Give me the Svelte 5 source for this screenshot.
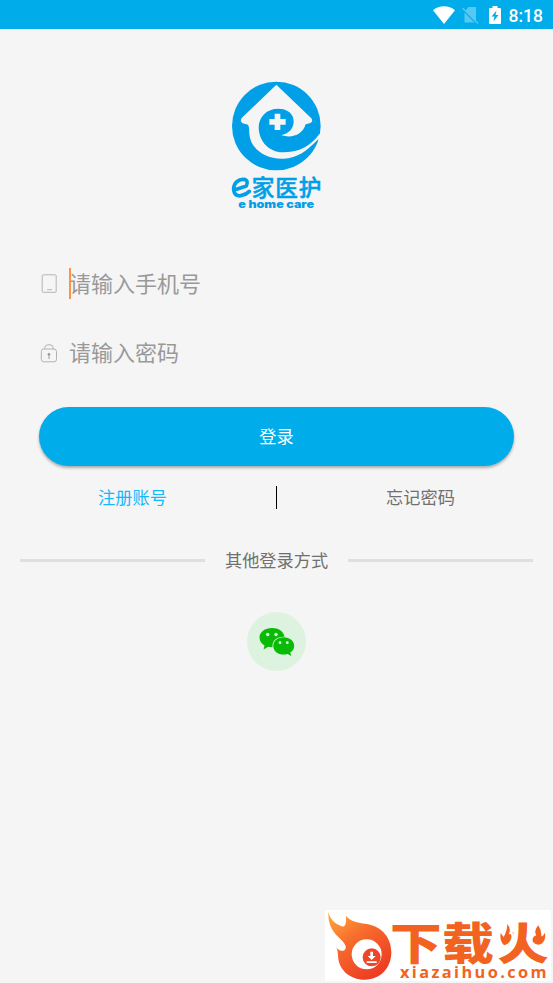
<script lang="ts">
    let phone = ''
    let password = ''
</script>

<div class="screen">
    <header class="status-bar">
        <svg class="wifi" viewBox="0 0 22 18" width="22" height="18">
            <path d="M0 4.2C6-1.2 16-1.2 22 4.2L11 18z" fill="#fff" />
        </svg>
        <svg class="sim" viewBox="0 0 17 18" width="17" height="18">
            <path d="M6.5 1H14V15.5L4 5.5V4zM2.5 6.5L12.5 16.5H2.5z" fill="#56c8f1" />
            <path d="M.5 2L16 17.5" stroke="#56c8f1" stroke-width="1.2" />
        </svg>
        <svg class="battery" viewBox="0 0 12 18" width="12" height="18">
            <path d="M3.5 0h5v2H11q1 0 1 1v14q0 1-1 1H1q-1 0-1-1V3q0-1 1-1h2.5z" fill="#fff" />
            <path d="M7.5 4.5L2.5 10.5H5.5L4.5 15.5L9.5 9H6.5z" fill="#00adea" />
        </svg>
        <span class="time">8:18</span>
    </header>

    <main>
        <svg class="logo" viewBox="0 0 330 435" width="110" height="145">
            <circle cx="163" cy="162" r="133" fill="#009fe8" />
            <path
                d="M163 38L268 139Q275 151 263 154L251 157C242 188 211 200 178 190C202 184 215 169 215 148C215 124 195 110 169 110C134 110 110 134 110 167C112 211 142 239 181 241C218 242 248 230 266 214Q283 200 292 186L302 186L300 212L293 212Q294 200 287 203C254 236 228 258 184 260C127 262 85 229 82 185Q82 163 78 158L62 154Q53 149 59 138z"
                fill="#f5f5f5"
            />
            <path d="M158 125h17v16h16v17h-16v16h-17v-16h-16v-17h16z" fill="#f5f5f5" />
            <path d="M37 354L73 342Q81 324 65 322C49 321 35 334 35 351C35 369 48 374 60 370Q73 367 82 358" fill="none" stroke="#009fe8" stroke-width="11" stroke-linecap="round" stroke-linejoin="round" />
            <text class="logo-cn" x="89" y="371" textLength="209">家医护</text>
            <text class="logo-en" x="49" y="407" textLength="227" lengthAdjust="spacingAndGlyphs">e home care</text>
        </svg>

        <form on:submit|preventDefault>
            <label class="field">
                <svg viewBox="0 0 18 20" width="18" height="20" fill="none" stroke="#b6b6b6">
                    <rect x="3.2" y=".8" width="14" height="17.5" rx="1" />
                    <path d="M8 15.7h5" />
                </svg>
                <span class="entry">
                    <input type="tel" placeholder="请输入手机号" bind:value={phone} />
                    <i class="caret"></i>
                </span>
            </label>
            <label class="field">
                <svg viewBox="0 0 18 20" width="18" height="20" fill="none" stroke="#b2b2b2">
                    <rect x="2.3" y="5" width="15.2" height="12.8" rx="2.5" />
                    <path d="M5.8 5V3.7Q6 .8 9 .8h2Q14 .8 14.2 3.7V5" />
                    <path d="M10 10v5" stroke="#999" />
                    <circle cx="10" cy="10.2" r="1.3" fill="#999" stroke="none" />
                </svg>
                <span class="entry">
                    <input class="password" type="password" placeholder="请输入密码" bind:value={password} />
                </span>
            </label>
            <button class="login" type="submit">登录</button>
        </form>

        <nav class="links">
            <span class="register">注册账号</span>
            <i class="split"></i>
            <span>忘记密码</span>
        </nav>

        <div class="other"><span>其他登录方式</span></div>

        <div class="wechat">
            <svg viewBox="0 0 36 30" width="36" height="30">
                <path d="M13 1C5.8 1 .5 5.2.5 10.5C.5 14 2.5 16.7 5.5 18.6L4.6 22.5L9.1 19.8Q11 20.3 13.5 20.2C12.8 13.5 18 9.4 25.5 9.7C24.5 4.4 19.5 1 13 1z" fill="#09bb07" />
                <path d="M24.5 10.3C18.5 10.3 14.3 14.1 14.3 18.9C14.3 24 18.7 27.5 24.6 27.5Q27 27.5 28.7 26.9L32.2 29L31.3 25.4C33.8 23.8 35.2 21.5 35.2 18.9C35.2 14.1 30.7 10.3 24.5 10.3z" fill="#09bb07" />
                <circle cx="8.7" cy="7.5" r="1.7" fill="#ddf3df" />
                <circle cx="17" cy="7.5" r="1.7" fill="#ddf3df" />
                <circle cx="21" cy="15.7" r="1.4" fill="#ddf3df" />
                <circle cx="28.3" cy="15.7" r="1.4" fill="#ddf3df" />
            </svg>
        </div>
    </main>

    <svg class="watermark" viewBox="15 30 678 213" width="226" height="71">
        <defs>
            <linearGradient id="flame" x1="0" y1="0" x2=".65" y2="1">
                <stop offset="0" stop-color="#ffad3d" />
                <stop offset=".45" stop-color="#f76c2c" />
                <stop offset="1" stop-color="#ed3c24" />
            </linearGradient>
        </defs>
        <rect x="15" y="30" width="678" height="213" fill="#fff" />
        <path d="M25 35C30 59 46 70 61 77C73 84 80 77 78 47C91 65 116 68 145 73C188 82 214 115 214 157C214 205 180 239 135 239C87 239 54 207 54 164Q53 154 49 139C51 151 66 156 74 150C86 139 66 121 51 107C33 87 24 68 25 35z" fill="url(#flame)" />
        <circle cx="140" cy="163" r="45" fill="#fff" />
        <circle cx="155" cy="172" r="27" fill="#ee4727" />
        <path d="M151 155h8v13h8l-12 12l-12-12h8zM140 184h30v5h-30z" fill="#fff" />
        <text class="mark-cn" x="210 367 532" y="0" transform="translate(0 180) scale(1 .85)">下载火</text>
        <path class="sparks" d="M562 72Q575 87 566 103Q576 98 574 114Q570 131 552 136Q538 122 542 99L551 111Q561 94 562 72zM655 76Q640 91 649 106Q634 111 639 126Q652 140 667 130Q680 116 674 98Q670 109 664 109Q665 91 655 76z" />
        <text class="mark-en" x="240" y="233" textLength="440">xiazaihuo.com</text>
    </svg>
</div>

<style>
    :global(body) {
        margin: 0;
        background: #f5f5f5;
    }

    .screen {
        position: relative;
        height: 983px;
        overflow: hidden;
        background: #f5f5f5;
        font-family: "Noto Sans CJK SC", sans-serif;
        color: #707070;
        font-size: 17.2px;
    }

    .status-bar {
        display: flex;
        align-items: center;
        justify-content: flex-end;
        box-sizing: border-box;
        height: 29px;
        padding-right: 10px;
        background: #00adea;
        color: #fff;
    }

    .wifi {
        margin-right: 7px;
    }

    .sim {
        margin-right: 10px;
    }

    .battery {
        margin-right: 8px;
    }

    .time {
        font: 500 17.5px/29px Roboto, sans-serif;
        padding-top: 3px;
    }

    main {
        display: flex;
        flex-direction: column;
        align-items: center;
        padding-top: 43px;
    }

    .logo-cn {
        font: 500 68px "Noto Sans CJK SC", sans-serif;
        fill: #009fe8;
        stroke: #009fe8;
        stroke-width: 1.5px;
        stroke-linejoin: round;
    }

    .logo-en {
        font: 900 31px Inter, sans-serif;
        fill: #009fe8;
    }

    form {
        width: 475px;
        padding-top: 32px;
    }

    .field {
        display: flex;
        align-items: center;
        height: 70px;
        gap: 12px;
    }

    .entry {
        position: relative;
        flex: 1;
    }

    input {
        display: block;
        width: 100%;
        height: 34px;
        padding: 0 0 4px;
        box-sizing: border-box;
        border: 0;
        outline: 0;
        background: none;
        font: 22px/30px "Noto Sans CJK SC", sans-serif;
    }

    .password {
        padding-bottom: 6px;
    }

    input::placeholder {
        color: #999;
        opacity: 1;
    }

    .caret {
        position: absolute;
        left: 0;
        top: 1px;
        width: 2px;
        height: 31px;
        background: #ff9248;
    }

    .login {
        display: block;
        width: 475px;
        height: 59px;
        margin-top: 18px;
        padding: 0 0 2px;
        border: 0;
        border-radius: 30px;
        background: #00adea;
        color: #fff;
        font: inherit;
        box-shadow: 0 2px 3px rgba(0, 0, 0, 0.3);
    }

    .links {
        display: grid;
        grid-template-columns: 1fr 1px 1fr;
        align-items: center;
        width: 575px;
        height: 23px;
        margin-top: 20px;
        text-align: center;
    }

    .links span {
        height: 23px;
        line-height: 22px;
    }

    .split {
        height: 23px;
        background: #000;
    }

    .register {
        color: #14b9fa;
    }

    .other {
        display: flex;
        align-items: center;
        gap: 20px;
        width: 513px;
        height: 27px;
        margin-top: 38px;
    }

    .other span {
        height: 27px;
        line-height: 25px;
    }

    .other::before,
    .other::after {
        content: '';
        flex: 1;
        height: 3px;
        background: #dfdfdf;
    }

    .wechat {
        display: flex;
        align-items: center;
        justify-content: center;
        width: 59px;
        height: 59px;
        margin-top: 38px;
        border-radius: 50%;
        background: #ddf3df;
    }

    .watermark {
        position: absolute;
        right: 2px;
        bottom: 2px;
    }

    .mark-cn {
        font: 900 155px "Noto Sans CJK SC", sans-serif;
        fill: #f26322;
    }

    .sparks {
        fill: #f26322;
        stroke: #fff;
        stroke-width: 14px;
        paint-order: stroke;
    }

    .mark-en {
        font: 700 49px "Open Sans", sans-serif;
        fill: #f26322;
    }
</style>
